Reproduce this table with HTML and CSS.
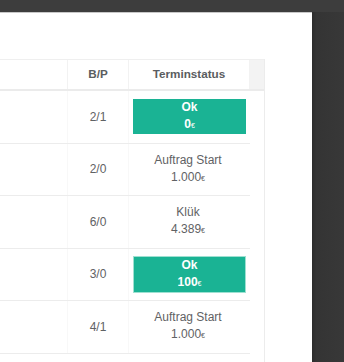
FILE: index.html
```html
<!DOCTYPE html>
<html lang="de">
<head>
<meta charset="utf-8">
<title>Terminstatus</title>
<link rel="stylesheet" href="styles.css">
</head>
<body>
<div class="topbar"></div>
<div class="layout">
  <main class="panel">
    <div class="grid">
      <div class="head">
        <div class="cell c1"></div>
        <div class="cell c2">B/P</div>
        <div class="cell c3">Terminstatus</div>
        <div class="gutter"></div>
      </div>
      <div class="row">
        <div class="cell c1"></div>
        <div class="cell c2">2/1</div>
        <div class="cell c3"><div class="ok">Ok<br>0<span class="eur">€</span></div></div>
      </div>
      <div class="row">
        <div class="cell c1"></div>
        <div class="cell c2">2/0</div>
        <div class="cell c3"><div class="txt">Auftrag Start<br>1.000<span class="eur">€</span></div></div>
      </div>
      <div class="row">
        <div class="cell c1"></div>
        <div class="cell c2">6/0</div>
        <div class="cell c3"><div class="txt">Klük<br>4.389<span class="eur">€</span></div></div>
      </div>
      <div class="row">
        <div class="cell c1"></div>
        <div class="cell c2">3/0</div>
        <div class="cell c3"><div class="ok ok-sel">Ok<br>100<span class="eur">€</span></div></div>
      </div>
      <div class="row">
        <div class="cell c1"></div>
        <div class="cell c2">4/1</div>
        <div class="cell c3"><div class="txt">Auftrag Start<br>1.000<span class="eur">€</span></div></div>
      </div>
    </div>
  </main>
  <aside class="side"></aside>
</div>
</body>
</html>
```

FILE: styles.css
```css
html, body {
  margin: 0;
  padding: 0;
}
body {
  width: 344px;
  height: 362px;
  overflow: hidden;
  background: #3a3a3a;
  font-family: "Liberation Sans", Arial, sans-serif;
  font-size: 12px;
  color: #5f6264;
}
.topbar {
  height: 12px;
  background: #3d3d3d;
}
.layout {
  display: flex;
  height: 350px;
}
.panel {
  width: 312px;
  flex: none;
  background: #fff;
  border-top: 1px solid #c8c8c8;
  padding-top: 46px;
  box-sizing: border-box;
  display: flex;
  flex-direction: column;
  overflow: hidden;
}
.side {
  flex: 1;
  background: linear-gradient(to right, #2c2c2c 0, #343434 4px, #383838 100%);
}
.grid {
  width: 264px;
  flex: 1;
  border-right: 1px solid #ececec;
}
.head {
  display: flex;
  border-top: 1px solid #efefef;
  border-bottom: 2px solid #ebebeb;
  font-weight: bold;
  font-size: 11.7px;
  color: #5a5d60;
}
.head .cell {
  padding: 6px 0 8px;
  line-height: 15px;
  border-right: 1px solid #f2f2f2;
}
.gutter {
  width: 14px;
  background: #f3f3f3;
}
.cell {
  text-align: center;
  box-sizing: border-box;
}
.c1 { width: 68px; }
.c2 { width: 61px; }
.c3 { width: 121px; }
.row {
  display: flex;
  width: 250px;
  border-bottom: 1px solid #ececec;
  height: 52.5px;
  box-sizing: border-box;
}
.row .cell {
  display: flex;
  align-items: center;
  justify-content: center;
  border-right: 1px solid #f8f8f8;
}
.row .c3 {
  border-right: none;
  padding: 0 4px 0 4px;
}
.txt {
  line-height: 17px;
  text-align: center;
  padding-right: 3px;
}
.ok {
  width: 100%;
  background: #1ab394;
  color: #fff;
  font-weight: bold;
  line-height: 17px;
  text-align: center;
}
.ok-sel {
  border: 1px solid #9ee0d1;
  box-sizing: border-box;
  padding: 0;
}
.eur {
  font-size: 7px;
  font-weight: normal;
}
```
